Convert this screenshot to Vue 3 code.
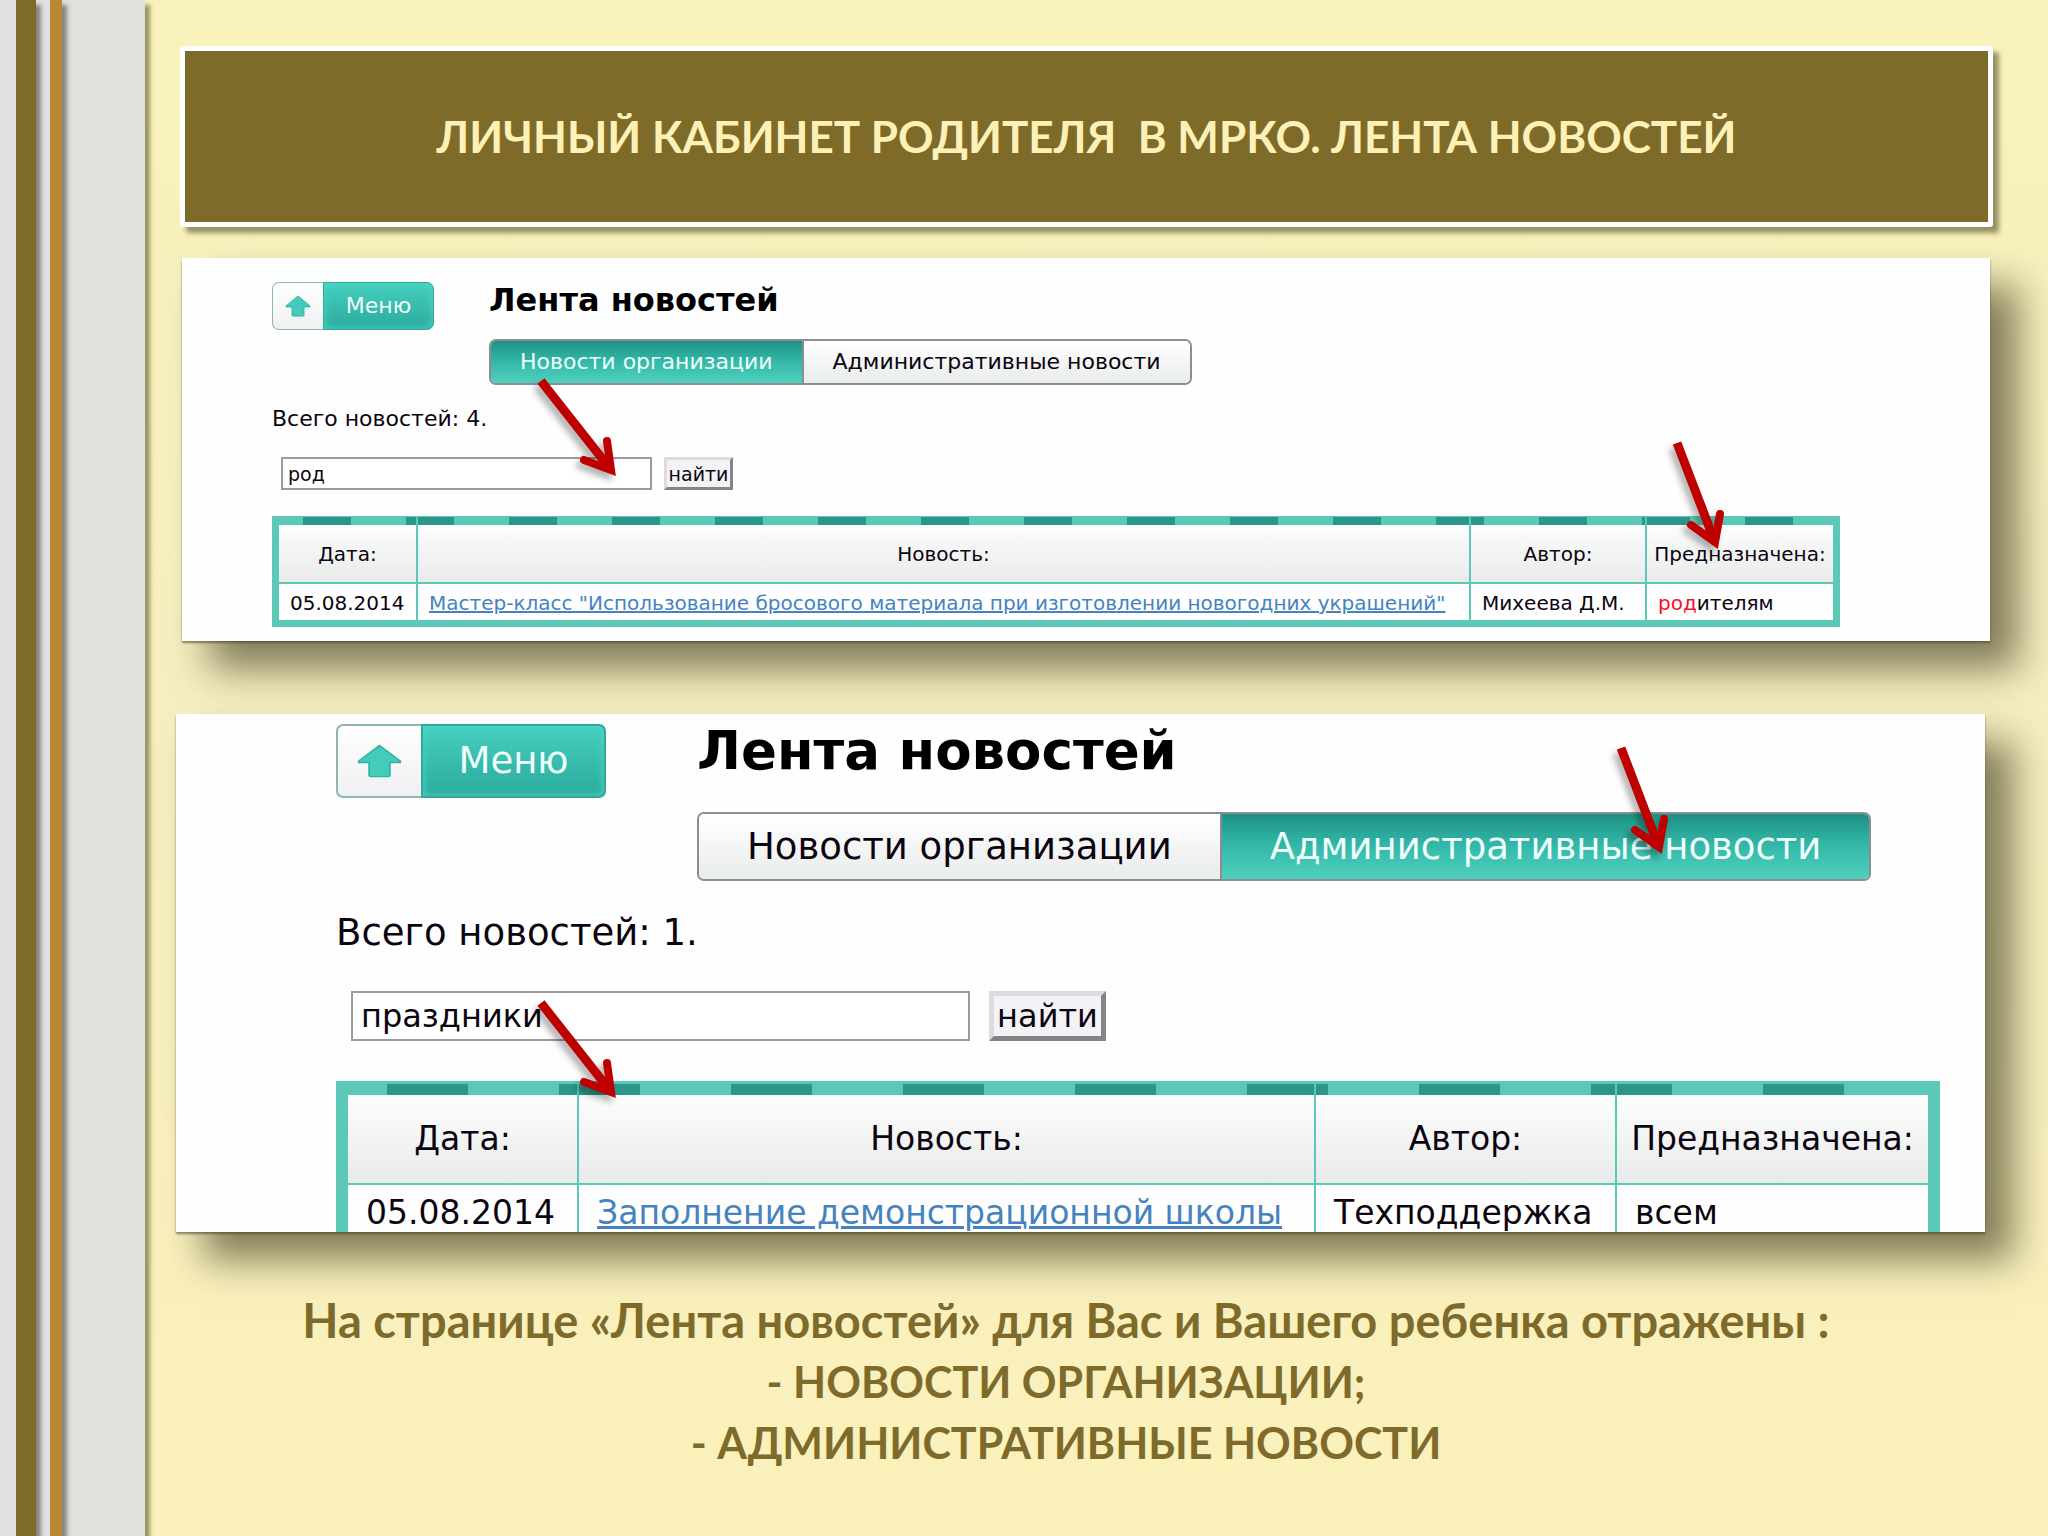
<script setup>
import { ref } from 'vue'

const tabs = ['Новости организации', 'Административные новости']

const feeds = ref([
  {
    id: 'org',
    activeTab: 0,
    total: 4,
    query: 'род',
    row: {
      date: '05.08.2014',
      title: 'Мастер-класс "Использование бросового материала при изготовлении новогодних украшений"',
      author: 'Михеева Д.М.',
      target: 'родителям'
    },
    arrows: ['first-left', 'first-right']
  },
  {
    id: 'admin',
    activeTab: 1,
    total: 1,
    query: 'праздники',
    row: {
      date: '05.08.2014',
      title: 'Заполнение демонстрационной школы',
      author: 'Техподдержка',
      target: 'всем'
    },
    arrows: ['second-left', 'second-right']
  }
])

// part of the text that starts with the search query
function found(feed) {
  return feed.query && feed.row.target.startsWith(feed.query) ? feed.query : ''
}

// two arrow shapes: a slanted one for the left side and a steep one for the right
function isLeft(arrow) {
  return arrow.endsWith('left')
}
</script>

<template>
  <div class="slide">
    <div class="rails">
      <div class="rail olive"></div>
      <div class="rail orange"></div>
    </div>

    <main class="main">
      <h1 class="banner">ЛИЧНЫЙ КАБИНЕТ РОДИТЕЛЯ&nbsp; В МРКО. ЛЕНТА НОВОСТЕЙ</h1>

      <section v-for="feed in feeds" :key="feed.id" class="panel" :class="feed.id">
        <div class="head">
          <div class="menu">
            <button class="menu-up" aria-label="Наверх">
              <svg viewBox="0 0 26 24" class="up-icon" preserveAspectRatio="none">
                <path d="M13 1 L25 12 V13 H19 V22 Q19 23 18 23 H8 Q7 23 7 22 V13 H1 V12 Z" fill="#45cbb9" stroke="#2fb3a3" stroke-width="1" />
              </svg>
            </button>
            <button class="menu-main">Меню</button>
          </div>
          <div>
            <h2>Лента новостей</h2>
            <div class="tabs">
              <button
                v-for="(tab, i) in tabs"
                :key="tab"
                class="tab"
                :class="{ active: feed.activeTab === i }"
                @click="feed.activeTab = i"
              >{{ tab }}</button>
            </div>
          </div>
        </div>

        <p class="total">Всего новостей: {{ feed.total }}.</p>

        <form class="search" @submit.prevent>
          <input v-model="feed.query" type="text" aria-label="Поиск новостей">
          <button class="find">найти</button>
        </form>

        <table>
          <colgroup>
            <col class="c-date">
            <col>
            <col class="c-author">
            <col class="c-target">
          </colgroup>
          <thead>
            <tr>
              <th>Дата:</th>
              <th>Новость:</th>
              <th>Автор:</th>
              <th>Предназначена:</th>
            </tr>
          </thead>
          <tbody>
            <tr>
              <td>{{ feed.row.date }}</td>
              <td><a href="#">{{ feed.row.title }}</a></td>
              <td>{{ feed.row.author }}</td>
              <td><span class="hit">{{ found(feed) }}</span>{{ feed.row.target.slice(found(feed).length) }}</td>
            </tr>
          </tbody>
        </table>

        <svg v-for="arrow in feed.arrows" :key="arrow" class="arrow" :class="arrow" viewBox="0 0 100 120" aria-hidden="true">
          <g v-if="isLeft(arrow)">
            <path d="M10 9 L77 94" />
            <path class="wings" d="M76 69 L80 98 L53 88" />
          </g>
          <g v-else>
            <path d="M11 10 L47 104" />
            <path class="wings" d="M54 81 L49 109 L25 92" />
          </g>
        </svg>
      </section>

      <div class="caption">
        <p class="intro">На странице «Лента новостей» для Вас и Вашего ребенка отражены :</p>
        <p>- НОВОСТИ ОРГАНИЗАЦИИ;</p>
        <p>- АДМИНИСТРАТИВНЫЕ НОВОСТИ</p>
      </div>
    </main>
  </div>
</template>

<style>
body {
  margin: 0;
  background: #f9f1bb;
}
</style>

<style scoped>
* {
  box-sizing: border-box;
}

.slide {
  display: flex;
  min-height: 100vh;
  overflow: hidden;
  background: linear-gradient(#f8f2ba, #f6eec0 45%, #faf1ba);
}

.rails {
  display: flex;
  flex: none;
  gap: 14px;
  width: 145px;
  padding-left: 16px;
  background: linear-gradient(90deg, #e1e1e1 40px, #dfe1dd 80px);
  box-shadow: 5px 5px 4px rgba(90, 90, 40, 0.6);
}

.rail {
  box-shadow: 5px 5px 4px rgba(70, 70, 70, 0.6);
}

.olive {
  width: 20px;
  background: #7e6b2a;
}

.orange {
  width: 12px;
  background: #b98832;
}

.main {
  flex: 1;
  min-width: 0;
  padding: 46px 58px 0 37px;
}

.banner {
  margin: 0 -3px 31px -2px;
  padding: 54px 20px 55px;
  border: 5px solid #fff;
  border-radius: 3px;
  background: #7e6b29;
  box-shadow: 6px 6px 5px rgba(70, 65, 30, 0.55);
  color: #fdf1b7;
  font: bold 44px/62px Lato, "Open Sans", sans-serif;
  text-align: center;
}

.panel {
  --text: 20px;
  --lead: 22px;
  --line: 24px;
  --edge: 7px;
  position: relative;
  padding: 24px 150px 14px 90px;
  background: #fefefe;
  box-shadow: 0 2px 2px rgba(70, 65, 40, 0.6), 28px 28px 36px rgba(40, 36, 10, 0.56);
  color: #0c0410;
  font: var(--text)/var(--line) "DejaVu Sans", sans-serif;
}

.panel.admin {
  --text: 33px;
  --lead: 37px;
  --line: 38px;
  --edge: 12px;
  margin: 73px 5px 0 -6px;
  padding: 10px 45px 0 160px;
}

button,
input {
  margin: 0;
  font: inherit;
  color: inherit;
}

.head {
  display: flex;
  align-items: flex-start;
  gap: 55px;
}

.admin .head {
  gap: 91px;
}

.menu {
  display: flex;
  width: 162px;
  height: 48px;
}

.admin .menu {
  width: 270px;
  height: 74px;
}

.menu-up {
  display: flex;
  align-items: center;
  justify-content: center;
  width: 51px;
  padding: 0;
  border: 1px solid #8fb5b3;
  border-right: 0;
  border-radius: 7px 0 0 7px;
  background: linear-gradient(#fff, #f0f0f2);
}

.admin .menu-up {
  width: 85px;
}

.up-icon {
  width: 26px;
  height: 22px;
}

.admin .up-icon {
  width: 45px;
  height: 34px;
}

.menu-main {
  flex: 1;
  padding: 0;
  border: 1px solid #2fa99b;
  border-radius: 0 7px 7px 0;
  background: linear-gradient(#45cfbe, #2baa9d);
  box-shadow: inset 0 0 8px #4ed8c6;
  color: #f0fffc;
  font-size: var(--lead);
}

.admin .menu-up,
.admin .menu-main {
  border-width: 2px;
}

.admin .menu-up {
  border-right: 0;
}

h2 {
  margin: 0 0 21px;
  color: #000;
  font: bold 32px/36px "DejaVu Sans", sans-serif;
}

.admin h2 {
  margin-bottom: 34px;
  font-size: 53px;
  line-height: 54px;
}

.tabs {
  display: flex;
  height: 46px;
  border: 2px solid #8b8d90;
  border-radius: 7px;
  overflow: hidden;
}

.admin .tabs {
  height: 69px;
}

.tab {
  padding: 0 29px;
  border: 0;
  background: linear-gradient(#fff, #e9ecec);
  font-size: var(--lead);
  white-space: nowrap;
}

.admin .tab {
  padding: 0 48px;
}

.tab + .tab {
  border-left: 2px solid #8b8d90;
}

.tab.active {
  background: linear-gradient(#1e9184, #34b9a9 50%, #50d0bf);
  color: #f0fffc;
}

.total {
  margin: 22px 0 26px;
  font-size: var(--lead);
}

.admin .total {
  margin: 33px 0 39px;
}

.search {
  display: flex;
  gap: 12px;
  height: 33px;
  margin: 0 0 26px 9px;
}

.admin .search {
  gap: 19px;
  height: 50px;
  margin: 0 0 40px 15px;
}

.search input {
  width: 371px;
  padding: 0 5px;
  border: 2px solid #9c9a9d;
  border-radius: 0;
  background: #fff;
  font-size: 19px;
}

.find {
  width: 69px;
  padding: 0;
  border: 3px solid;
  border-color: #dcdce0 #848488 #848488 #dcdce0;
  background: #f3f3f5;
  font-size: 19px;
}

.admin .search input {
  width: 619px;
  padding: 0 8px;
  font-size: 32px;
}

.admin .find {
  width: 117px;
  border-width: 5px;
  font-size: 32px;
}

table {
  width: 100%;
  border: var(--edge) solid #5cc9b8;
  border-top-width: 1px;
  border-spacing: 0;
  table-layout: fixed;
}

.admin table {
  border-top-width: 3px;
  border-bottom: 0;
}

.c-date {
  width: 137px;
}

.c-author {
  width: 176px;
}

.c-target {
  width: 188px;
}

.admin .c-date {
  width: 229px;
}

.admin .c-author {
  width: 301px;
}

.admin .c-target {
  width: 313px;
}

/* dashed strip running along the top of the header */
thead tr {
  background: linear-gradient(90deg, #2c968a 48px, #5cc9b8 48px) 24px 0 / 103px 8px repeat-x;
}

.admin thead tr {
  background: linear-gradient(90deg, #2c968a 81px, #5cc9b8 81px) 39px 0 / 172px 11px repeat-x;
}

th {
  height: 67px;
  padding: 8px 0 0;
  border-bottom: 2px solid #5cc9b8;
  background: linear-gradient(#fcfdfd, #e6e8e8) 0 8px no-repeat;
  font-weight: normal;
  white-space: nowrap;
}

.admin th {
  height: 101px;
  padding-top: 11px;
  background-position: 0 11px;
}

td {
  padding: 7px 11px 5px;
  background: #fefefe;
  white-space: nowrap;
}

.admin td {
  padding: 9px 18px 0;
}

th + th,
td + td {
  border-left: 2px solid #5cc9b8;
}

a {
  color: #4583c0;
}

.hit {
  color: #f5102c;
}

.arrow {
  position: absolute;
  width: 100px;
  height: 120px;
  overflow: visible;
  fill: none;
  stroke: #bf0000;
  stroke-width: 9;
  filter: drop-shadow(-4px 5px 3px rgba(0, 0, 0, 0.3));
}

.wings {
  stroke-width: 8;
  stroke-linecap: round;
  stroke-miterlimit: 10;
}

.first-left {
  top: 114px;
  left: 349px;
}

.first-right {
  top: 175px;
  right: 224px;
}

.second-left {
  top: 280px;
  left: 355px;
}

.second-right {
  top: 24px;
  right: 275px;
}

.caption {
  margin: 58px 40px 0 0;
  color: #7e6b2c;
  font: bold 43px/61px Lato, "Open Sans", sans-serif;
  text-align: center;
}

.caption p {
  margin: 0;
}

.caption .intro {
  font-size: 47px;
}
</style>
